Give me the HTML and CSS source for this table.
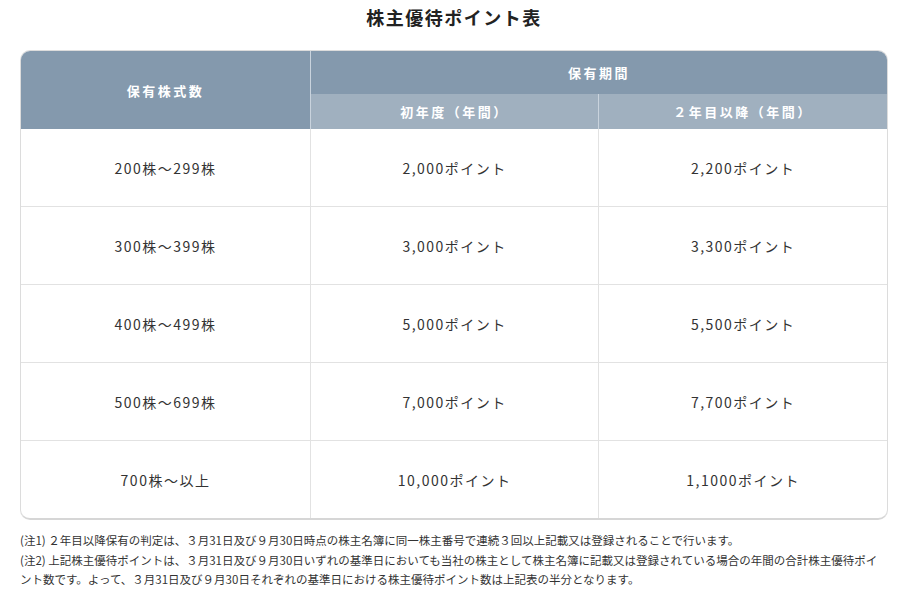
FILE: index.html
```html
<!DOCTYPE html>
<html lang="ja">
<head>
<meta charset="utf-8">
<link rel="stylesheet" href="styles.css">
</head>
<body>
<div class="page">
  <h1 class="title">株主優待ポイント表</h1>
  <div class="table-wrap">
    <table class="points">
      <thead>
        <tr>
          <th rowspan="2" class="h-main">保有株式数</th>
          <th colspan="2" class="h-main h-period">保有期間</th>
        </tr>
        <tr>
          <th class="h-sub">初年度（年間）</th>
          <th class="h-sub">２年目以降（年間）</th>
        </tr>
      </thead>
      <tbody>
        <tr><td>200株～299株</td><td>2,000ポイント</td><td>2,200ポイント</td></tr>
        <tr><td>300株～399株</td><td>3,000ポイント</td><td>3,300ポイント</td></tr>
        <tr><td>400株～499株</td><td>5,000ポイント</td><td>5,500ポイント</td></tr>
        <tr><td>500株～699株</td><td>7,000ポイント</td><td>7,700ポイント</td></tr>
        <tr><td>700株～以上</td><td>10,000ポイント</td><td>1,1000ポイント</td></tr>
      </tbody>
    </table>
  </div>
  <div class="notes">
    <p>(注1) ２年目以降保有の判定は、３月31日及び９月30日時点の株主名簿に同一株主番号で連続３回以上記載又は登録されることで行います。</p>
    <p>(注2) 上記株主優待ポイントは、３月31日及び９月30日いずれの基準日においても当社の株主として株主名簿に記載又は登録されている場合の年間の合計株主優待ポイント数です。よって、３月31日及び９月30日それぞれの基準日における株主優待ポイント数は上記表の半分となります。</p>
  </div>
</div>
</body>
</html>
```

FILE: styles.css
```css
html, body {
  margin: 0;
  padding: 0;
  background: #ffffff;
}
.page {
  width: 868px;
  margin: 0 auto;
  padding: 0 12px 0 20px;
  font-family: "Noto Sans CJK JP", "Noto Sans", sans-serif;
  color: #333333;
}
.title {
  margin: 0;
  padding-top: 5px;
  height: 45px;
  text-align: center;
  font-size: 18px;
  font-weight: 700;
  letter-spacing: 1.5px;
  line-height: 24px;
  color: #222222;
}
.table-wrap {
  border: 1px solid #dcdcdc;
  border-bottom: 2px solid #d6d6d6;
  border-radius: 10px;
  overflow: hidden;
}
.points {
  width: 100%;
  border-collapse: collapse;
  table-layout: fixed;
}
.points th {
  color: #ffffff;
  font-weight: 700;
  font-size: 13px;
  letter-spacing: 2.5px;
  padding: 0;
}
.h-main {
  background: #8499ad;
  height: 43px;
}
.h-period {
  border-left: 1px solid #c9d3dd;
}
.h-sub {
  background: #a0b0bf;
  height: 35px;
  border-left: 1px solid #c9d3dd;
}
.points th[rowspan] {
  width: 289px;
}
.points td {
  height: 77px;
  padding: 0;
  text-align: center;
  font-size: 14px;
  letter-spacing: 1.5px;
  color: #333333;
  border-top: 1px solid #e2e2e2;
  border-left: 1px solid #e2e2e2;
}
.points td:first-child {
  border-left: none;
}
.points tbody tr:first-child td {
  border-top: none;
}
.notes {
  margin-top: 11px;
  font-family: "Noto Sans CJK JP", sans-serif;
  font-size: 11.5px;
  line-height: 19.5px;
  color: #333333;
}
.notes p {
  margin: 0;
}
```
